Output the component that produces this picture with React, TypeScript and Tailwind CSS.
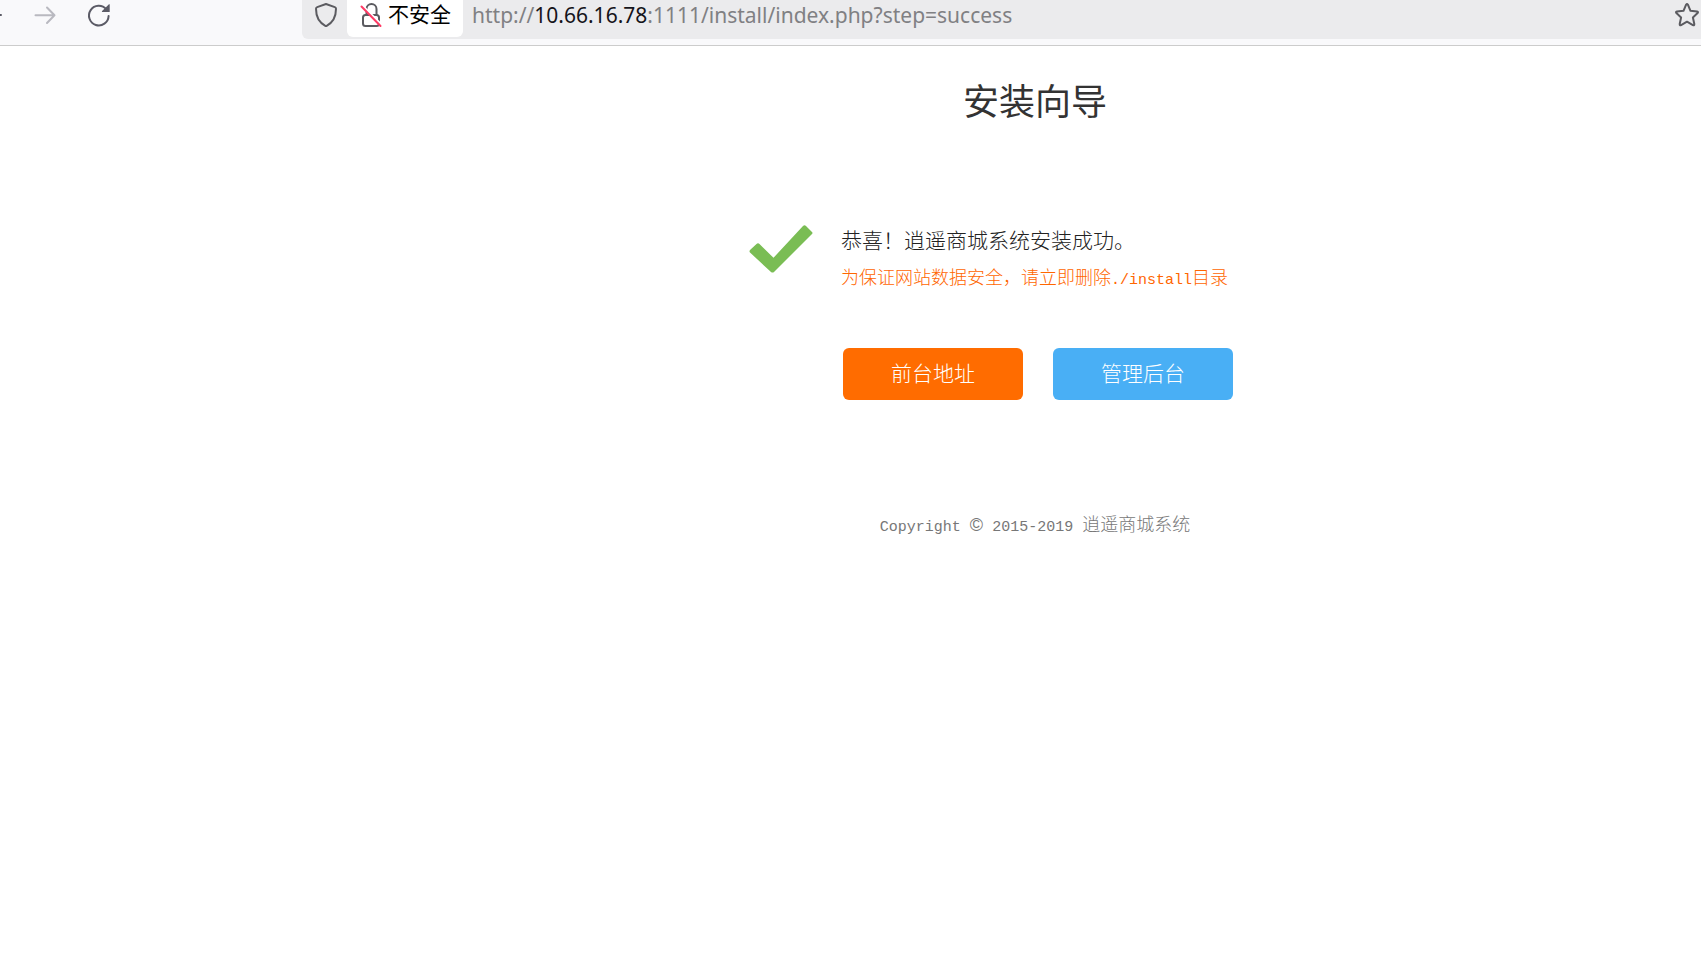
function Toolbar() {
  return (
    <header className="flex h-[46px] items-start overflow-hidden border-b border-[#cccccc] bg-[#f9f9fb]">
      <nav className="flex h-[30px] w-[302px] shrink-0 items-center">
        <button type="button" aria-label="后退" className="h-6 w-8 shrink-0">
          <svg width="32" height="24" viewBox="0 0 32 24" fill="none" stroke="#5b5b66" strokeWidth="2">
            <path d="M-10 12H1" strokeLinecap="round" />
          </svg>
        </button>
        <button type="button" aria-label="前进" className="h-6 w-8 shrink-0">
          <svg width="32" height="24" viewBox="0 0 32 24" fill="none" stroke="#b9b9c0" strokeWidth="2" strokeLinecap="round" strokeLinejoin="round">
            <path d="M3.500 12.300H22.500M15 4.500L22.500 12.300L15 20" />
          </svg>
        </button>
        <button type="button" aria-label="刷新" className="ml-5 h-7 w-8 shrink-0">
          <svg width="32" height="28" viewBox="0 0 32 28" fill="none">
            <path d="M22.300 8.300A9.800 9.800 0 1 0 24.600 15" stroke="#5b5b66" strokeWidth="2" strokeLinecap="round" />
            <path d="M25.700 3.600V10.900H18.500C17.900 10.900 17.700 10.300 18.100 9.900L24.700 3.400C25.100 3 25.700 3.200 25.700 3.600Z" fill="#5b5b66" />
          </svg>
        </button>
      </nav>
      <div className="flex h-[39px] min-w-0 flex-1 items-start rounded-bl-md bg-[#ebebed]">
        <button type="button" aria-label="跟踪保护" className="flex h-[30px] w-[45px] shrink-0 items-center justify-center pl-0.5">
          <svg width="24" height="26" viewBox="0 0 24 26" fill="none" stroke="#5b5b60" strokeWidth="2" strokeLinejoin="round">
            <path d="M12 2L20.800 5.100Q22 5.500 22 6.800C22 14.500 18.700 20.600 12.700 23.800Q12 24.200 11.300 23.800C5.300 20.600 2 14.500 2 6.800Q2 5.500 3.200 5.100Z" />
          </svg>
        </button>
        <button type="button" className="flex h-[37px] w-[116px] shrink-0 items-start rounded-b-md bg-white pl-3">
          <svg className="shrink-0" width="26" height="30" viewBox="0 0 26 30" fill="none">
            <path d="M7.500 15V9A5 5 0 0 1 17.500 9V15" stroke="#5b5b60" strokeWidth="2" />
            <rect x="4" y="15" width="16" height="11" rx="2.500" stroke="#5b5b60" strokeWidth="2" />
            <path d="M3 5L23 25" stroke="white" strokeWidth="2" />
            <path d="M2.500 6.500L21.500 26" stroke="#ff3b65" strokeWidth="2" strokeLinecap="round" />
          </svg>
          <span className="ml-[3px] whitespace-nowrap text-[21px] leading-[30px] text-black">不安全</span>
        </button>
        <div role="textbox" aria-label="地址" className="ml-[9px] min-w-0 flex-1 whitespace-nowrap font-['Noto_Sans',sans-serif] text-[21px] leading-[30px] text-[#808083]">
          http://<span className="text-[#15141a]">10.66.16.78</span>:1111/install/index.php?step=success
        </div>
        <button type="button" aria-label="添加书签" className="flex h-[30px] w-7 shrink-0 items-center justify-center">
          <svg width="26" height="26" viewBox="0 0 26 26" fill="none" stroke="#5b5b60" strokeWidth="2" strokeLinejoin="round">
            <path d="M12.100 2.700Q13 1.400 13.900 2.700L16.500 8.800L23.100 9.400Q24.600 9.800 23.600 11L18.900 15.500L20.300 22Q20.400 23.700 18.900 23.100L13 19.700L7.100 23.100Q5.600 23.700 5.700 22L7.100 15.500L2.400 11Q1.400 9.800 2.900 9.400L9.500 8.800Z" />
          </svg>
        </button>
      </div>
    </header>
  );
}

export default function App() {
  return (
    <div className="min-h-screen bg-white font-['Liberation_Sans','Noto_Sans_CJK_SC',sans-serif]">
      <Toolbar />
      <main className="flex flex-col items-center pl-[369px] text-[#333333]">
        <h1 className="mt-8 text-[36px] leading-[50px]">安装向导</h1>
        <section className="mt-[97px] flex gap-7 pr-[88px]">
          <svg className="shrink-0" width="64" height="50" viewBox="0 0 64 50" role="img" aria-label="成功">
            <path d="M1 25L7.500 19Q9 17.700 10.500 19L24.500 32.800L54 1Q55.500 -.5 57 1L63 7Q64 8 63 9L25 47Q23.500 48.200 22 47L1 27.500Q0 26.500 1 25Z" fill="#7abd54" />
          </svg>
          <div className="font-light">
            <p className="text-[21px] leading-[32px] text-[#222222]">恭喜！逍遥商城系统安装成功。</p>
            <p className="mt-1 text-[18px] leading-[34px] text-[#ff6600]">
              为保证网站数据安全，请立即删除<span className="font-['Liberation_Mono',monospace] text-[15px]">./install</span>目录
            </p>
            <div className="ml-0.5 mt-[50px] flex gap-[30px] text-[21px] leading-[52px] text-white">
              <a href="#front" className="w-[180px] rounded-md bg-[#ff6c00] text-center">前台地址</a>
              <a href="#admin" className="w-[180px] rounded-md bg-[#49aff5] text-center">管理后台</a>
            </div>
          </div>
        </section>
        <footer className="mt-[110px] text-[18px] font-light leading-[30px] text-[#777777]">
          <span className="font-['Liberation_Mono',monospace] text-[15px]">Copyright </span>©
          <span className="font-['Liberation_Mono',monospace] text-[15px]"> 2015-2019 </span>逍遥商城系统
        </footer>
      </main>
    </div>
  );
}
